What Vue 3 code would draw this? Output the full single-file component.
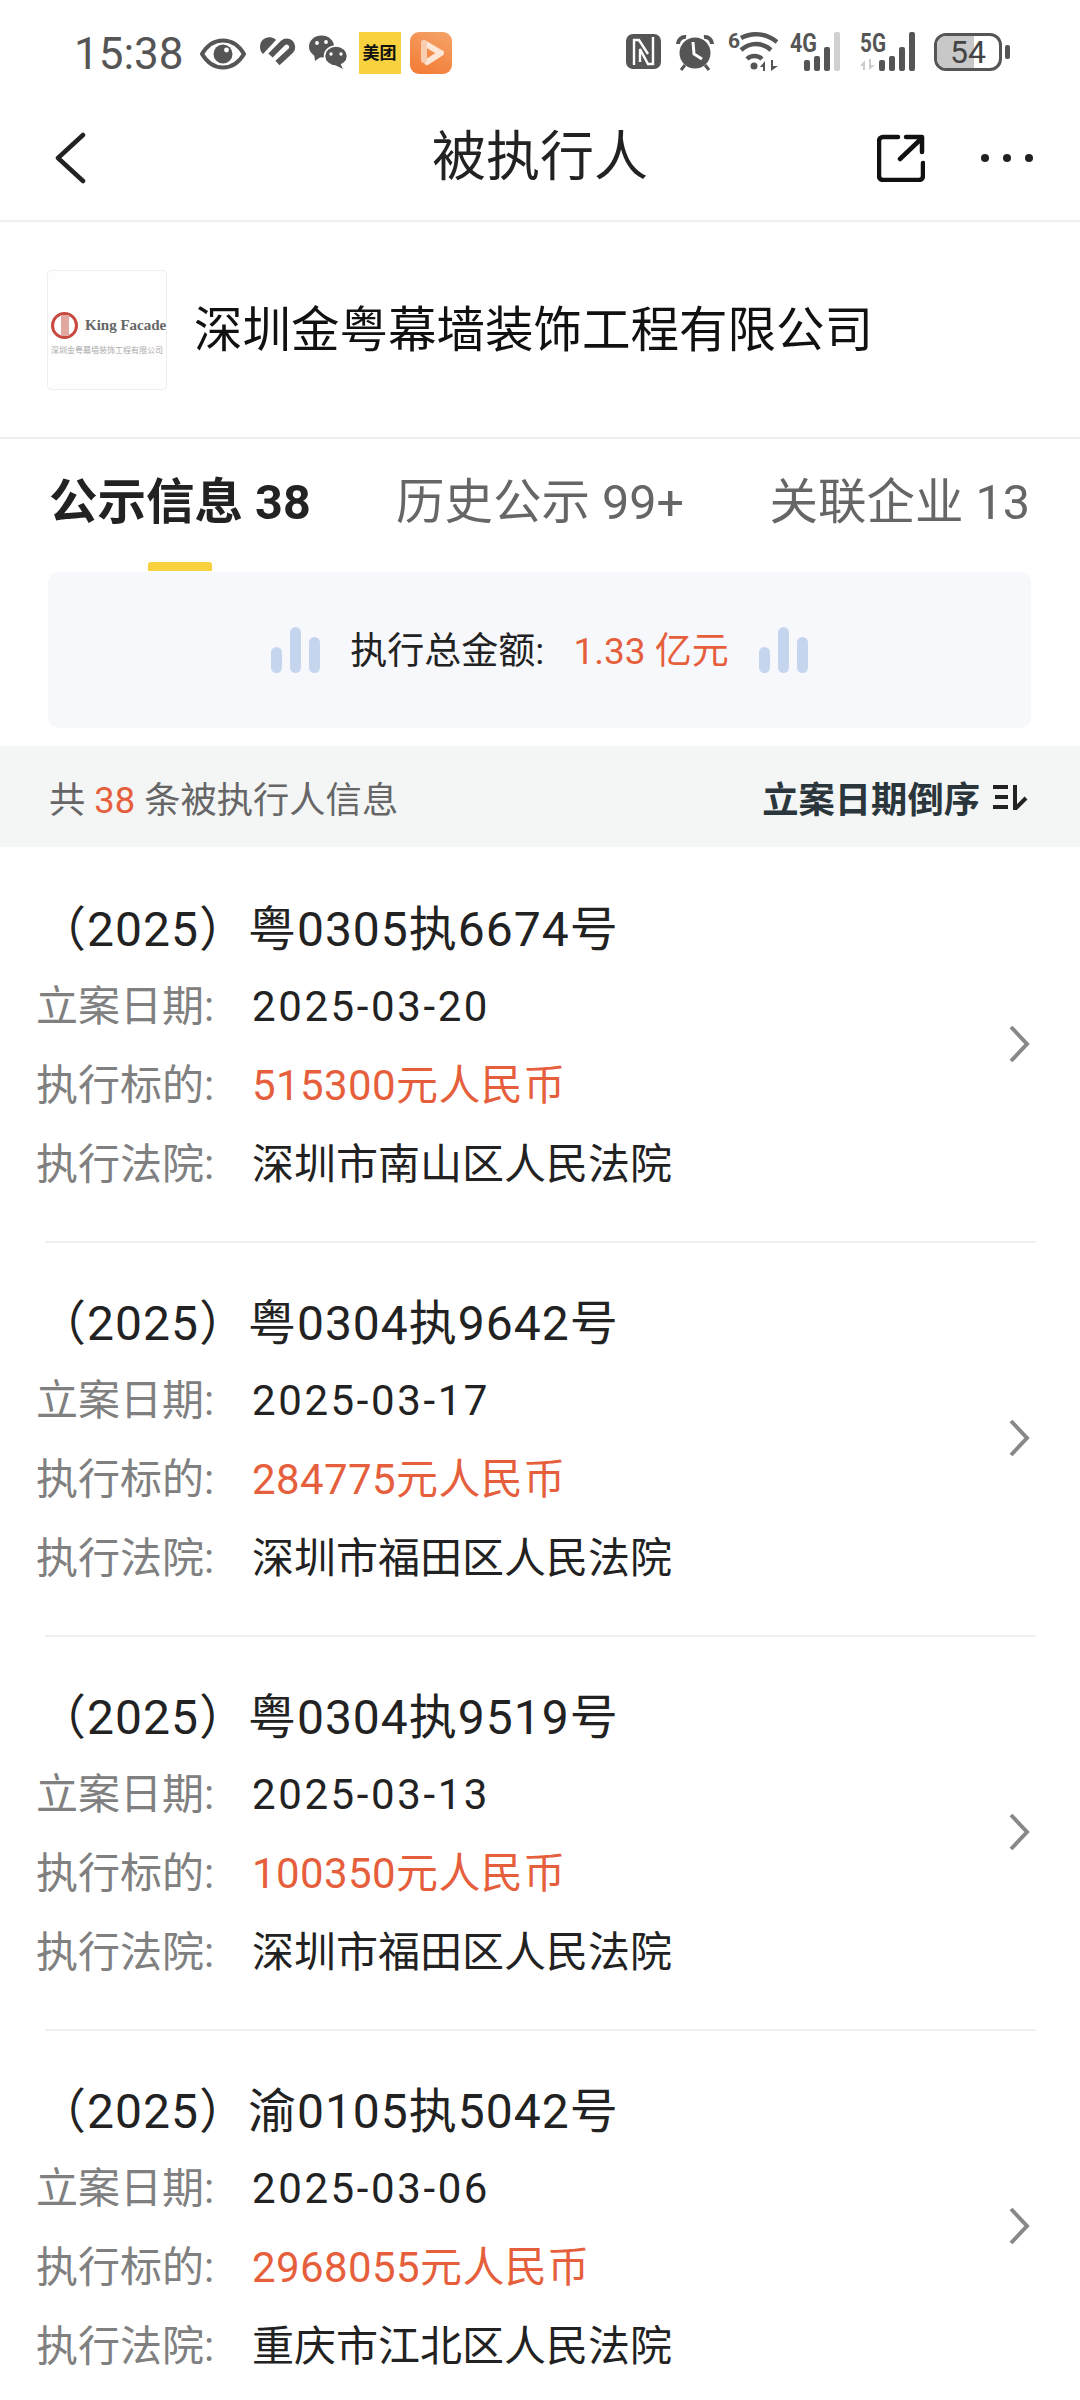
<script setup>
const tabs = [
  { name: '公示信息', count: '38', active: true },
  { name: '历史公示', count: '99+' },
  { name: '关联企业', count: '13' }
];

const cases = [
  { no: '（2025）粤0305执6674号', date: '2025-03-20', amount: '515300元人民币', court: '深圳市南山区人民法院' },
  { no: '（2025）粤0304执9642号', date: '2025-03-17', amount: '284775元人民币', court: '深圳市福田区人民法院' },
  { no: '（2025）粤0304执9519号', date: '2025-03-13', amount: '100350元人民币', court: '深圳市福田区人民法院' },
  { no: '（2025）渝0105执5042号', date: '2025-03-06', amount: '2968055元人民币', court: '重庆市江北区人民法院' }
];
</script>

<template>
  <div class="page">
    <div class="status-bar">
      <span class="time">15:38</span>
      <svg class="eye" width="46" height="32" viewBox="0 0 46 32">
        <path d="M2 16C8 6 15 2.500 23 2.500S38 6 44 16c-6 10-13 13.500-21 13.500S8 26 2 16z" fill="none" stroke="#555" stroke-width="4" />
        <circle cx="23" cy="16" r="9.500" fill="#555" />
        <circle cx="26.500" cy="12" r="2.400" fill="#fff" />
      </svg>
      <svg class="heart" width="36" height="30" viewBox="0 0 36 30">
        <path d="M15 3C9-1 0 2 0 11c0 3 1 5 3 7L16 4z" fill="#555" />
        <path d="M10.500 19.500L23 7a5.500 5.500 0 0 1 8 7.500L17.500 27" fill="none" stroke="#555" stroke-width="6" />
      </svg>
      <svg class="wechat" width="38" height="34" viewBox="0 0 38 34">
        <ellipse cx="12.500" cy="11.500" rx="12.500" ry="11" fill="#555" />
        <path d="M5 18l1 8 7-5z" fill="#555" />
        <ellipse cx="27" cy="21" rx="11.500" ry="10" fill="#555" stroke="#fff" stroke-width="1.500" />
        <path d="M31 28l3 6-8-4z" fill="#555" />
        <circle cx="8" cy="8" r="1.900" fill="#fff" />
        <circle cx="17" cy="7" r="1.900" fill="#fff" />
        <circle cx="22" cy="19" r="1.700" fill="#fff" />
        <circle cx="32" cy="19" r="1.700" fill="#fff" />
      </svg>
      <div class="meituan">美团</div>
      <svg class="video" width="42" height="42" viewBox="0 0 42 42">
        <defs>
          <linearGradient id="videoBg" x1="0.700" y1="0" x2="0.300" y2="1">
            <stop offset="0" stop-color="#f4a064" />
            <stop offset="1" stop-color="#f47d38" />
          </linearGradient>
        </defs>
        <rect width="42" height="42" rx="9" fill="url(#videoBg)" />
        <path d="M14 11l17 10-14 9" fill="none" stroke="#fce6d6" stroke-width="6" stroke-linecap="round" stroke-linejoin="round" />
        <path d="M14 11v17" fill="none" stroke="#f8cdb0" stroke-width="6" stroke-linecap="round" />
      </svg>
      <div class="status-right">
        <svg class="nfc" width="35" height="35" viewBox="0 0 35 35">
          <rect width="35" height="35" rx="7" fill="#555" />
          <path d="M8 31V6h5l9 14M27 3v27h-5L14 15v13" fill="none" stroke="#fff" stroke-width="2.400" />
        </svg>
        <svg class="alarm" width="38" height="38" viewBox="0 0 38 38">
          <circle cx="19" cy="20" r="15.500" fill="#555" />
          <path d="M17 9l1 12 8 5" fill="none" stroke="#fff" stroke-width="3" />
          <path d="M2 11a7 7 0 0 1 8-7M36 11a7 7 0 0 0-8-7" fill="none" stroke="#555" stroke-width="4" />
          <path d="M9 32l-4 5M29 32l4 5" stroke="#555" stroke-width="3" />
        </svg>
        <svg class="net" width="52" height="50" viewBox="-2 -10 52 50">
          <text x="0" y="16" class="net-six">6</text>
          <path d="M13 6c11-6 25-5 36 4M13 18c9-8 21-8 30 0M19 27c4-4 11-4 15 0" fill="none" stroke="#555" stroke-width="4.500" />
          <circle cx="26" cy="34" r="3.500" fill="#555" />
          <path d="M37 29l-5 6h3v4h2zM43 28h2v6h5l-7 5z" fill="#555" />
        </svg>
        <svg class="net" width="58" height="50" viewBox="0 -10 58 50">
          <text x="0" y="20" class="net-text" textLength="27" lengthAdjust="spacingAndGlyphs">4G</text>
          <rect x="14" y="28" width="6" height="11" rx="2" fill="#555" />
          <rect x="24" y="24" width="6" height="15" rx="2" fill="#555" />
          <rect x="34" y="15" width="6" height="24" rx="2" fill="#555" />
          <rect x="44" y="0" width="6" height="39" rx="2" fill="#d0d0d0" />
        </svg>
        <svg class="net" width="62" height="50" viewBox="0 -10 62 50">
          <text x="0" y="20" class="net-text" textLength="26" lengthAdjust="spacingAndGlyphs">5G</text>
          <path d="M5 28l-5 6h3v4h2zM9 27h2v6h4l-6 5z" fill="#ccc" />
          <rect x="19" y="28" width="6" height="11" rx="2" fill="#555" />
          <rect x="29" y="24" width="6" height="15" rx="2" fill="#555" />
          <rect x="39" y="15" width="6" height="24" rx="2" fill="#555" />
          <rect x="49" y="0" width="6" height="39" rx="2" fill="#555" />
        </svg>
        <div class="battery">
          <div class="battery-body">
            <div class="battery-fill"></div>
            <span>54</span>
          </div>
          <div class="battery-cap"></div>
        </div>
      </div>
    </div>

    <div class="nav-bar">
      <svg class="back" width="32" height="52" viewBox="0 0 32 52">
        <path d="M29 3L4 26l25 23" fill="none" stroke="#222" stroke-width="4.500" stroke-linecap="round" stroke-linejoin="round" />
      </svg>
      <div class="nav-title">被执行人</div>
      <svg class="share" width="48" height="48" viewBox="0 0 48 48">
        <path d="M21 3H6a4 4 0 0 0-4 4v35a4 4 0 0 0 4 4h36a4 4 0 0 0 4-4V29" fill="none" stroke="#111" stroke-width="4.500" stroke-linecap="round" />
        <path d="M23 25L45 4M29 3h16v15" fill="none" stroke="#111" stroke-width="4.500" stroke-linecap="round" stroke-linejoin="round" />
      </svg>
      <div class="dots">
        <i></i><i></i><i></i>
      </div>
    </div>

    <div class="company">
      <div class="logo">
        <div class="logo-top">
          <span class="logo-ring"><b></b></span>
          <span class="logo-en">King Facade</span>
        </div>
        <div class="logo-cn">深圳金粤幕墙装饰工程有限公司</div>
      </div>
      <div class="company-name">深圳金粤幕墙装饰工程有限公司</div>
    </div>

    <div class="tabs">
      <div v-for="tab in tabs" :key="tab.name" class="tab" :class="{ active: tab.active }">
        {{ tab.name }} {{ tab.count }}
        <span v-if="tab.active" class="tab-line"></span>
      </div>
    </div>

    <div class="summary">
      <div class="bars"><i></i><i></i><i></i></div>
      <div class="summary-text">执行总金额: <span class="summary-value">1.33 亿元</span></div>
      <div class="bars"><i></i><i></i><i></i></div>
    </div>

    <div class="filter">
      <div class="filter-count">共 <span class="red">38</span> 条被执行人信息</div>
      <div class="filter-sort">
        立案日期倒序
        <svg width="36" height="26" viewBox="0 0 36 26">
          <path d="M1 3h15M3 13h13M1 23h15" stroke="#222" stroke-width="4" />
          <path d="M23 1v24l11-11" fill="none" stroke="#222" stroke-width="4" />
        </svg>
      </div>
    </div>

    <div class="list">
      <div v-for="item in cases" :key="item.no" class="case">
        <div class="case-info">
          <div class="case-no">{{ item.no }}</div>
          <div class="case-line"><span class="label">立案日期:</span><span class="date">{{ item.date }}</span></div>
          <div class="case-line"><span class="label">执行标的:</span><span class="amount">{{ item.amount }}</span></div>
          <div class="case-line"><span class="label">执行法院:</span><span>{{ item.court }}</span></div>
        </div>
        <svg width="22" height="38" viewBox="0 0 22 38">
          <path d="M3 2l16 17L3 36" fill="none" stroke="#888" stroke-width="4" />
        </svg>
      </div>
    </div>
  </div>
</template>

<style>
html,
body {
  margin: 0;
  background: #fff;
}
</style>

<style scoped>
.page {
  width: 1080px;
  height: 2400px;
  overflow: hidden;
  background: #fff;
  font-family: Roboto, "Noto Sans CJK SC", sans-serif;
  color: #222;
}

.status-bar {
  height: 100px;
  box-sizing: border-box;
  padding: 32px 70px 0 74px;
  display: flex;
  align-items: flex-start;
}

.time {
  font-size: 44px;
  line-height: 44px;
  color: #555;
  margin-right: 16px;
}

.eye {
  margin-top: 6px;
  margin-right: 14px;
}

.heart {
  margin-top: 4px;
  margin-right: 13px;
}

.wechat {
  margin-top: 3px;
  margin-right: 12px;
}

.meituan {
  width: 42px;
  height: 42px;
  background: #f7d23e;
  color: #111;
  font-size: 17px;
  font-weight: 700;
  line-height: 42px;
  text-align: center;
  margin-right: 9px;
  white-space: nowrap;
}

.status-right {
  margin-left: auto;
  display: flex;
  align-items: flex-start;
  gap: 12px;
}

.nfc {
  margin-top: 2px;
}

.alarm {
  margin-left: 3px;
  margin-top: 1px;
}

.net {
  margin-top: -10px;
}

.net-six {
  font-size: 21px;
  font-weight: 700;
  fill: #555;
}

.net-text {
  font-size: 26px;
  font-weight: 700;
  fill: #555;
}

.battery {
  display: flex;
  align-items: center;
  height: 40px;
}

.battery-body {
  position: relative;
  width: 68px;
  height: 38px;
  box-sizing: border-box;
  border: 3px solid #555;
  border-radius: 12px;
  overflow: hidden;
  text-align: center;
}

.battery-fill {
  position: absolute;
  left: 0;
  top: 0;
  bottom: 0;
  width: 37px;
  background: #c8c8c8;
}

.battery-body span {
  position: relative;
  font-size: 32px;
  line-height: 32px;
  color: #444;
}

.battery-cap {
  width: 5px;
  height: 14px;
  margin-left: 3px;
  background: #555;
  border-radius: 2px;
}

.nav-bar {
  position: relative;
  height: 122px;
  box-sizing: border-box;
  border-bottom: 2px solid #efefef;
  display: flex;
  align-items: center;
  padding: 0 47px 4px 54px;
}

.nav-title {
  position: absolute;
  left: 0;
  right: 0;
  top: 23px;
  text-align: center;
  font-size: 54px;
  line-height: 70px;
  color: #222;
}

.share {
  margin-left: auto;
  margin-right: 56px;
}

.dots {
  display: flex;
  gap: 14px;
}

.dots i {
  width: 8px;
  height: 8px;
  border-radius: 50%;
  background: #222;
}

.company {
  height: 217px;
  box-sizing: border-box;
  border-bottom: 2px solid #efefef;
  display: flex;
  align-items: center;
  padding: 0 47px;
}

.logo {
  width: 120px;
  height: 120px;
  box-sizing: border-box;
  border: 1px solid #eee;
  border-radius: 4px;
  margin-right: 27px;
  padding: 41px 0 0 3px;
  overflow: hidden;
  background: #fefefe;
}

.logo-top {
  display: flex;
  align-items: center;
  gap: 7px;
}

.logo-ring {
  width: 27px;
  height: 27px;
  box-sizing: border-box;
  border: 3px solid #c84a3f;
  border-radius: 50%;
  display: flex;
  justify-content: center;
  flex-shrink: 0;
}

.logo-ring b {
  width: 8px;
  background: #e0a8a0;
}

.logo-en {
  font-family: "Liberation Serif", serif;
  font-size: 15px;
  font-weight: 700;
  color: #666;
  white-space: nowrap;
}

.logo-cn {
  margin-top: 7px;
  font-size: 8px;
  line-height: 10px;
  color: #aaa;
  white-space: nowrap;
}

.company-name {
  font-size: 48.500px;
  line-height: 60px;
  color: #111;
  white-space: nowrap;
  margin-top: 3px;
}

.tabs {
  height: 133px;
  box-sizing: border-box;
  display: flex;
  justify-content: space-between;
  padding: 34px 50px 0 49px;
}

.tab {
  position: relative;
  height: 60px;
  font-size: 48.500px;
  line-height: 60px;
  color: #666;
  white-space: nowrap;
}

.tab.active {
  font-weight: 700;
  color: #222;
}

.tab-line {
  position: absolute;
  left: 99px;
  top: 89px;
  width: 64px;
  height: 9px;
  border-radius: 3px 3px 0 0;
  background: #f7d23e;
}

.summary {
  height: 156px;
  margin: 0 49px 18px 48px;
  border-radius: 10px;
  background: #f7f8fc;
  display: flex;
  align-items: center;
  justify-content: center;
}

.bars {
  display: flex;
  align-items: flex-end;
  gap: 8px;
  height: 46px;
}

.bars i {
  width: 11px;
  height: 26px;
  border-radius: 6px;
  background: #c6d5ee;
}

.bars i:nth-child(2) {
  height: 46px;
}

.bars i:nth-child(3) {
  height: 36px;
}

.summary-text {
  margin: 0 30px;
  padding-top: 3px;
  font-size: 37px;
  line-height: 46px;
  color: #222;
  white-space: nowrap;
}

.summary-value {
  margin-left: 20px;
  color: #e65f3c;
}

.red {
  color: #e65f3c;
}

.filter {
  height: 101px;
  background: #f4f5f5;
  display: flex;
  align-items: center;
  justify-content: space-between;
  padding: 0 52px 0 49px;
  font-size: 36.300px;
  white-space: nowrap;
}

.filter-count {
  color: #666;
}

.filter-sort {
  display: flex;
  align-items: center;
  gap: 12px;
  font-weight: 700;
  color: #2a363b;
}

.list {
  padding: 0 45px 0 0;
}

.case {
  height: 394px;
  box-sizing: border-box;
  display: flex;
  align-items: center;
  justify-content: space-between;
  position: relative;
  padding: 0 5px 0 36px;
}

.case::after {
  content: "";
  position: absolute;
  left: 45px;
  right: -1px;
  bottom: -2px;
  height: 2px;
  background: #f0f0f0;
}

.case:last-child::after {
  display: none;
}

.case-info {
  align-self: flex-start;
  padding-top: 50px;
}

.case-no {
  font-size: 48px;
  line-height: 66px;
  letter-spacing: 1px;
  color: #222;
  white-space: nowrap;
  margin-bottom: 4px;
  margin-left: 2px;
}

.case-line {
  display: flex;
  font-size: 42px;
  line-height: 79px;
  white-space: nowrap;
}

.label {
  width: 216px;
  color: #808080;
}

.date {
  letter-spacing: 2.600px;
}

.amount {
  color: #e65f3c;
  letter-spacing: 0.400px;
}
</style>
